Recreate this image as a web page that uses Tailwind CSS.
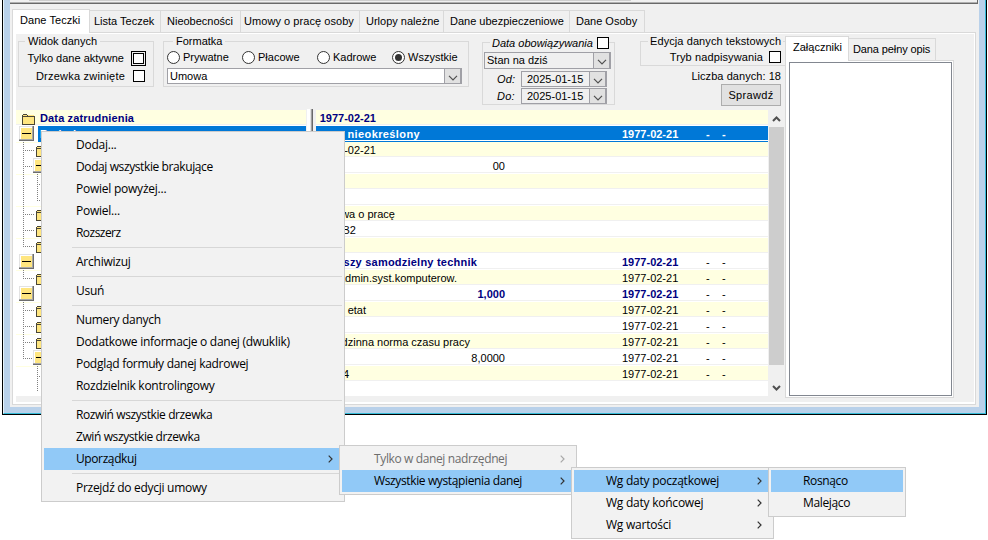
<!DOCTYPE html>
<html lang="pl">
<head>
    <meta charset="UTF-8">
    <meta name="viewport" content="width=device-width, initial-scale=1.0">
    <title>Dane Teczki</title>
    <script src="https://cdn.jsdelivr.net/npm/@tailwindcss/browser@4"></script>
</head>
<body class="relative w-[988px] h-[540px] overflow-hidden bg-white text-black text-[11px] leading-[14px] whitespace-nowrap font-['Liberation_Sans',Arial,sans-serif]">
    <svg class="hidden">
        <symbol id="folder" viewBox="0 0 13 12">
            <path d="M1 2h11v9H1z" fill="#ffe680"/>
            <path d="M.5 2v9.500h11.500V3.500H6M1 1.500h4M5.500 2v1.500M1 3.500h5" fill="none" stroke="#4a4636"/>
        </symbol>
        <symbol id="minus" viewBox="0 0 15 15">
            <path d="M0 0h15v15H0z" fill="#6d6d6d"/>
            <path d="M0 0h14v14H0z" fill="#a8a8a8"/>
            <path d="M0 0h13v13H0z" fill="#e3e3e3"/>
            <path d="M1 1h12v12H1z" fill="#fff"/>
            <path d="M2 2h11v11H2z" fill="#ffe680"/>
            <path d="M3 7.5h9" stroke="#000"/>
        </symbol>
        <symbol id="down" viewBox="0 0 10 6">
            <path d="M1 .8l4 4 4-4" fill="none" stroke="#505050" stroke-width="1.2"/>
        </symbol>
        <symbol id="right" viewBox="0 0 5 8">
            <path d="M.7 .7L4 4 .7 7.3" fill="none" stroke="currentColor" stroke-width="1.2"/>
        </symbol>
    </svg>

    <!-- window -->
    <div class="ml-[2px] w-[985px] h-[415px] border-x border-b border-black">
        <div class="h-full border-l border-l-[#e8f4fa] border-r border-b border-r-[#35bcd8] border-b-[#35bcd8] bg-[#b9d1ea] pl-[6px] pr-[6px] pb-[6px]">
            <div class="h-full bg-[#f0f0f0]">
                <div class="flex flex-col h-[4px] w-[968px] border-b border-b-[#696969] border-r border-r-[#696969]">
                    <div class="ml-[19px] w-[602px] h-px bg-[#cdcdcd]"></div>
                    <div class="mt-px h-px bg-[#b0b0b0]"></div>
                </div>

                <!-- main tabs -->
                <div class="relative flex items-end h-[28px] ml-[2px]">
                    <div class="relative z-10 w-[78px] h-[24px] -mb-px bg-white border border-b-0 border-[#d9d9d9] pl-[7px] pt-[3px] tracking-[0.005em]">Dane Teczki</div>
                    <div class="w-[71px] h-[22px] border-t border-r border-[#d9d9d9] pl-[4px] pt-[3px]">Lista Teczek</div>
                    <div class="w-[80px] h-[22px] border-t border-r border-[#d9d9d9] pl-[6px] pt-[3px]">Nieobecności</div>
                    <div class="w-[119px] h-[22px] border-t border-r border-[#d9d9d9] pl-[3px] pt-[3px] tracking-[0.005em]">Umowy o pracę osoby</div>
                    <div class="w-[84px] h-[22px] border-t border-r border-[#d9d9d9] pl-[6px] pt-[3px]">Urlopy należne</div>
                    <div class="w-[126px] h-[22px] border-t border-r border-[#d9d9d9] pl-[6px] pt-[3px]">Dane ubezpieczeniowe</div>
                    <div class="w-[75px] h-[22px] border-t border-r border-[#d9d9d9] pl-[6px] pt-[3px]">Dane Osoby</div>
                </div>

                <div class="ml-[2px] w-[964px] h-[373px] border border-[#d9d9d9] bg-white pl-[3px] pt-px pr-px pb-[2px]">
                    <div class="flex h-full bg-[#f0f0f0]">
                        <div class="w-[769px]">
                            <!-- filters -->
                            <div class="flex items-start h-[76px] pl-[2px]">
                                <fieldset class="w-[136px] h-[53px] border border-[#d9d9d9]">
                                    <legend class="h-[15px] ml-[6px] px-[3px]">Widok danych</legend>
                                    <div class="flex items-center justify-end h-[18px] pr-[7px] gap-[7px]">
                                        <span>Tylko dane aktywne</span>
                                        <span class="size-[15px] border border-black p-px"><i class="block size-[11px] border border-black bg-white"></i></span>
                                    </div>
                                    <div class="flex items-center justify-end h-[18px] pr-[8px] gap-[8px]">
                                        <span class="tracking-[0.02em]">Drzewka zwinięte</span>
                                        <i class="size-[12px] border border-black bg-white"></i>
                                    </div>
                                </fieldset>

                                <fieldset class="ml-[9px] w-[306px] h-[53px] border border-[#d9d9d9]">
                                    <legend class="h-[15px] ml-[9px] px-[3px]">Formatka</legend>
                                    <div class="flex items-center h-[16px] pl-[3px]">
                                        <div class="flex items-center gap-[3px] w-[75px]"><i class="size-[13px] rounded-full border border-[#333] bg-white"></i>Prywatne</div>
                                        <div class="flex items-center gap-[3px] w-[75px]"><i class="size-[13px] rounded-full border border-[#333] bg-white"></i>Płacowe</div>
                                        <div class="flex items-center gap-[3px] w-[75px]"><i class="size-[13px] rounded-full border border-[#333] bg-white"></i>Kadrowe</div>
                                        <div class="flex items-center gap-[3px]"><i class="size-[13px] rounded-full border border-[#333] bg-white p-[2px]"><b class="block size-[7px] rounded-full bg-[#333]"></b></i>Wszystkie</div>
                                    </div>
                                    <div class="flex justify-between ml-[3px] mt-[3px] w-[295px] h-[16px] border border-[#a0a0a6] bg-white">
                                        <span class="pl-[2px]">Umowa</span>
                                        <span class="flex items-center justify-center w-[17px] h-[14px] border-l border-r border-[#a0a0a6] bg-[#e1e1e1] pt-[3px]"><svg class="w-[10px] h-[6px]"><use href="#down"/></svg></span>
                                    </div>
                                </fieldset>

                                <fieldset class="ml-[13px] w-[133px] h-[71px] border border-[#d9d9d9]">
                                    <legend class="flex items-center h-[17px] ml-[7px] pl-[2px] gap-[4px] italic">Data obowiązywania <i class="size-[12px] border border-black bg-white"></i></legend>
                                    <div class="flex justify-between ml-px mt-px w-[127px] h-[17px] border border-[#a0a0a6]">
                                        <span class="pl-[2px]">Stan na dziś</span>
                                        <span class="flex items-center justify-center w-[17px] border-l border-r border-[#a0a0a6] bg-[#e1e1e1] pt-[3px]"><svg class="w-[10px] h-[6px]"><use href="#down"/></svg></span>
                                    </div>
                                    <div class="flex items-center mt-[2px] pl-[14px]">
                                        <i class="w-[24px] tracking-[0.02em]">Od:</i>
                                        <div class="flex justify-between w-[86px] h-[16px] border border-[#a0a0a6]">
                                            <span class="pl-[5px]">2025-01-15</span>
                                            <span class="flex items-center justify-center w-[17px] border-l border-r border-[#a0a0a6] bg-[#e1e1e1] pt-[3px]"><svg class="w-[10px] h-[6px]"><use href="#down"/></svg></span>
                                        </div>
                                    </div>
                                    <div class="flex items-center mt-px pl-[14px]">
                                        <i class="w-[24px] tracking-[0.02em]">Do:</i>
                                        <div class="flex justify-between w-[86px] h-[16px] border border-[#a0a0a6]">
                                            <span class="pl-[5px]">2025-01-15</span>
                                            <span class="flex items-center justify-center w-[17px] border-l border-r border-[#a0a0a6] bg-[#e1e1e1] pt-[3px]"><svg class="w-[10px] h-[6px]"><use href="#down"/></svg></span>
                                        </div>
                                    </div>
                                </fieldset>

                                <div class="ml-[25px] w-[145px]">
                                    <fieldset class="h-[32px] border border-r-0 border-[#d9d9d9]">
                                        <legend class="h-[15px] ml-[7px] px-[2px] tracking-[0.008em]">Edycja danych tekstowych</legend>
                                        <div class="flex items-center justify-end h-[16px] pr-[4px] gap-[6px]">
                                            <span class="tracking-[0.01em]">Tryb nadpisywania</span>
                                            <i class="size-[12px] border border-black bg-white"></i>
                                        </div>
                                    </fieldset>
                                    <div class="mt-[3px] pr-[4px] text-right tracking-[0.005em]">Liczba danych: 18</div>
                                    <div class="flex items-center justify-center ml-auto mr-[4px] mt-px w-[60px] h-[22px] border border-[#adadad] bg-[#e1e1e1] tracking-[0.03em]">Sprawdź</div>
                                </div>
                            </div>

                            <!-- tree and values -->
                            <div class="flex h-[286px]">
                                <div class="w-[290px] bg-white">
                                    <div class="relative h-[286px] overflow-hidden">
                                        <svg class="absolute left-0 top-0 w-[290px] h-[286px]" shape-rendering="crispEdges">
                                            <path d="M0 0h290v14H0z" fill="#ffffe1"/>
                                            <path d="M0 14.5h290" stroke="#f0f0f0"/>
                                            <path d="M22 16h268v16H22z" fill="#0078d7"/>
                                            <path d="M0 32.5h290M0 64.5h290M0 96.5h290M0 128.5h290M0 160.5h290M0 192.5h290M0 224.5h290M0 256.5h290" stroke="#ffffe1"/>
                                            <g stroke="#808080" stroke-dasharray="1 1" fill="none">
                                                <path d="M7.5 32v105M7.5 160v9M7.5 192v57M21.5 64v27M21.5 256v25"/>
                                                <path d="M7 40.5h11M7 56.5h11M7 104.5h11M7 120.5h11M7 136.5h11M7 168.5h11M7 200.5h11M7 216.5h11M7 232.5h11M7 248.5h11"/>
                                                <path d="M21 74.5h6M21 90.5h6M21 266.5h6"/>
                                            </g>
                                            <use href="#folder" x="6" y="3" width="13" height="12"/>
                                            <use href="#minus" x="3" y="16" width="15" height="15"/>
                                            <use href="#folder" x="20" y="35" width="13" height="12"/>
                                            <use href="#minus" x="17" y="48" width="15" height="15"/>
                                            <use href="#folder" x="20" y="99" width="13" height="12"/>
                                            <use href="#folder" x="20" y="115" width="13" height="12"/>
                                            <use href="#folder" x="20" y="131" width="13" height="12"/>
                                            <use href="#minus" x="3" y="144" width="15" height="15"/>
                                            <use href="#folder" x="20" y="163" width="13" height="12"/>
                                            <use href="#minus" x="3" y="176" width="15" height="15"/>
                                            <use href="#folder" x="20" y="195" width="13" height="12"/>
                                            <use href="#folder" x="20" y="211" width="13" height="12"/>
                                            <use href="#folder" x="20" y="227" width="13" height="12"/>
                                            <use href="#minus" x="17" y="240" width="15" height="15"/>
                                        </svg>
                                        <div class="relative pl-[24px] pt-px font-bold">
                                            <div class="h-[16px] text-[#000080] tracking-[0.013em]">Data zatrudnienia</div>
                                            <div class="h-[16px] text-white">Rodzaj</div>
                                        </div>
                                    </div>
                                </div>
                                <div class="-mt-px w-[10px] flex">
                                    <div class="ml-px w-[3px] bg-white"></div>
                                    <div class="w-[1px] bg-[#e3e3e3]"></div>
                                    <div class="w-[1px] bg-[#a0a0a0]"></div>
                                    <div class="w-[1px] bg-[#696969]"></div>
                                </div>
                                <div id="rows" class="w-[452px] bg-white"></div>
                                <div class="ml-px w-[15px] flex flex-col items-center">
                                    <svg class="w-[15px] h-[17px]"><path d="M4 11l3.500-3.500 3.500 3.500" fill="none" stroke="#505050" stroke-width="2"/></svg>
                                    <div class="w-full h-[238px] bg-[#cdcdcd]"></div>
                                    <svg class="w-[15px] h-[31px]"><path d="M4 21l3.500 3.500 3.500-3.500" fill="none" stroke="#505050" stroke-width="2"/></svg>
                                </div>
                            </div>
                        </div>

                        <!-- attachments -->
                        <div class="w-[169px] h-[364px] pt-[2px]">
                            <div class="flex items-end h-[24px]">
                                <div class="relative z-10 w-[64px] h-[25px] -mb-px bg-white border border-b-0 border-[#d9d9d9] pl-[7px] pt-[3px]">Załączniki</div>
                                <div class="w-[87px] h-[22px] border-t border-r border-[#d9d9d9] pl-[4px] pt-[3px] tracking-[-0.01em]">Dana pełny opis</div>
                            </div>
                            <div class="h-[338px] border border-[#d9d9d9] bg-white pl-[3px] pt-px pb-px">
                                <div class="w-[163px] h-[334px] border border-[#828790] bg-white"></div>
                            </div>
                        </div>
                    </div>
                </div>
            </div>
        </div>
    </div>

    <!-- context menu -->
    <div class="absolute left-[41px] top-[131px] w-[304px] h-[371px] border border-[#cccccc] bg-[#f2f2f2] p-[2px] font-['Open_Sans','Noto_Sans',sans-serif] text-[12px] leading-[22px] tracking-[-0.02em]">
        <div class="h-[22px] pl-[32px]">Dodaj...</div>
        <div class="h-[22px] pl-[32px] tracking-[-0.033em]">Dodaj wszystkie brakujące</div>
        <div class="h-[22px] pl-[32px]">Powiel powyżej...</div>
        <div class="h-[22px] pl-[32px]">Powiel...</div>
        <div class="h-[22px] pl-[32px] tracking-[-0.045em]">Rozszerz</div>
        <div class="ml-[28px] my-[3px] h-px bg-[#d7d7d7]"></div>
        <div class="h-[22px] pl-[32px]">Archiwizuj</div>
        <div class="ml-[28px] my-[3px] h-px bg-[#d7d7d7]"></div>
        <div class="h-[22px] pl-[32px]">Usuń</div>
        <div class="ml-[28px] my-[3px] h-px bg-[#d7d7d7]"></div>
        <div class="h-[22px] pl-[32px] tracking-[-0.026em]">Numery danych</div>
        <div class="h-[22px] pl-[32px] tracking-[-0.023em]">Dodatkowe informacje o danej (dwuklik)</div>
        <div class="h-[22px] pl-[32px] tracking-[-0.024em]">Podgląd formuły danej kadrowej</div>
        <div class="h-[22px] pl-[32px] tracking-[-0.024em]">Rozdzielnik kontrolingowy</div>
        <div class="ml-[28px] my-[3px] h-px bg-[#d7d7d7]"></div>
        <div class="h-[22px] pl-[32px] tracking-[-0.033em]">Rozwiń wszystkie drzewka</div>
        <div class="h-[22px] pl-[32px] tracking-[-0.033em]">Zwiń wszystkie drzewka</div>
        <div class="flex items-center justify-between h-[22px] pl-[32px] pr-[9px] bg-[#91c9f7] tracking-[-0.033em]">Uporządkuj <svg class="w-[5px] h-[8px] text-[#333]"><use href="#right"/></svg></div>
        <div class="ml-[28px] my-[3px] h-px bg-[#d7d7d7]"></div>
        <div class="h-[22px] pl-[32px] tracking-[-0.024em]">Przejdź do edycji umowy</div>
    </div>

    <div class="absolute left-[339px] top-[445px] w-[238px] h-[50px] border border-[#cccccc] bg-[#f2f2f2] p-[2px] font-['Open_Sans','Noto_Sans',sans-serif] text-[12px] leading-[22px] tracking-[-0.02em]">
        <div class="flex items-center justify-between h-[22px] pl-[32px] pr-[9px] text-[#6d6d6d] tracking-[-0.031em]">Tylko w danej nadrzędnej <svg class="w-[5px] h-[8px] text-[#a8a8a8]"><use href="#right"/></svg></div>
        <div class="flex items-center justify-between h-[22px] pl-[32px] pr-[9px] bg-[#91c9f7] tracking-[-0.031em]">Wszystkie wystąpienia danej <svg class="w-[5px] h-[8px] text-[#333]"><use href="#right"/></svg></div>
    </div>

    <div class="absolute left-[571px] top-[467px] w-[203px] h-[72px] border border-[#cccccc] bg-[#f2f2f2] p-[2px] font-['Open_Sans','Noto_Sans',sans-serif] text-[12px] leading-[22px] tracking-[-0.02em]">
        <div class="flex items-center justify-between h-[22px] pl-[32px] pr-[9px] bg-[#91c9f7]">Wg daty początkowej <svg class="w-[5px] h-[8px] text-[#333]"><use href="#right"/></svg></div>
        <div class="flex items-center justify-between h-[22px] pl-[32px] pr-[9px]">Wg daty końcowej <svg class="w-[5px] h-[8px] text-[#333]"><use href="#right"/></svg></div>
        <div class="flex items-center justify-between h-[22px] pl-[32px] pr-[9px]">Wg wartości <svg class="w-[5px] h-[8px] text-[#333]"><use href="#right"/></svg></div>
    </div>

    <div class="absolute left-[768px] top-[467px] w-[138px] h-[50px] border border-[#cccccc] bg-[#f2f2f2] p-[2px] font-['Open_Sans','Noto_Sans',sans-serif] text-[12px] leading-[22px] tracking-[-0.03em]">
        <div class="h-[22px] pl-[32px] bg-[#91c9f7]">Rosnąco</div>
        <div class="h-[22px] pl-[32px]">Malejąco</div>
    </div>

    <script>
        // [text, right edge of the text inside the column, date, bold]
        const rows = [
            ['1977-02-21', 60, '', true],
            ['nieokreślony', 104, '1977-02-21', true],
            ['1977-02-21', 60, '', false],
            ['00', 189, '', false],
            ['', 0, '', false],
            ['', 0, '', false],
            ['Umowa o pracę', 79, '', false],
            ['B2', 40, '', false],
            ['', 0, '', false],
            ['Starszy samodzielny technik', 161, '1977-02-21', true],
            ['admin.syst.komputerow.', 141, '1977-02-21', false],
            ['1,000', 189, '1977-02-21', true],
            ['etat', 50, '1977-02-21', false],
            ['', 0, '1977-02-21', false],
            ['godzinna norma czasu pracy', 154, '1977-02-21', false],
            ['8,0000', 189, '1977-02-21', false],
            ['4', 33, '1977-02-21', false],
        ];
        document.getElementById('rows').innerHTML = rows.map(([text, edge, date, bold], i) => {
            const selected = i === 1;
            const fill = selected ? 'bg-[#0078d7] text-white' : i % 2 ? 'bg-white' : 'bg-[#ffffe1]';
            const face = bold ? (selected ? 'font-bold' : 'font-bold text-[#000080]') : '';
            const spacing = selected ? 'tracking-[0.035em]' : bold && text.length > 10 ? 'tracking-[0.02em]' : '';
            const line = selected ? 'bg-white' : 'bg-[#f0f0f0]';
            const dash = selected ? '' : 'font-normal text-black';
            return `<div class="h-[16px] ${selected ? 'bg-[#0078d7]' : ''}">
                <div class="flex h-[14px] pt-px ${fill} ${face}">
                    <div class="flex justify-end w-[306px] ${spacing}" style="padding-right:${306 - edge}px">${text}</div>
                    <div class="w-[84px]">${date}</div>
                    ${date ? `<div class="w-[16px] ${dash}">-</div><div class="${dash}">-</div>` : ''}
                </div>
                <div class="h-px ${line}"></div>
            </div>`;
        }).join('');
    </script>
</body>
</html>
